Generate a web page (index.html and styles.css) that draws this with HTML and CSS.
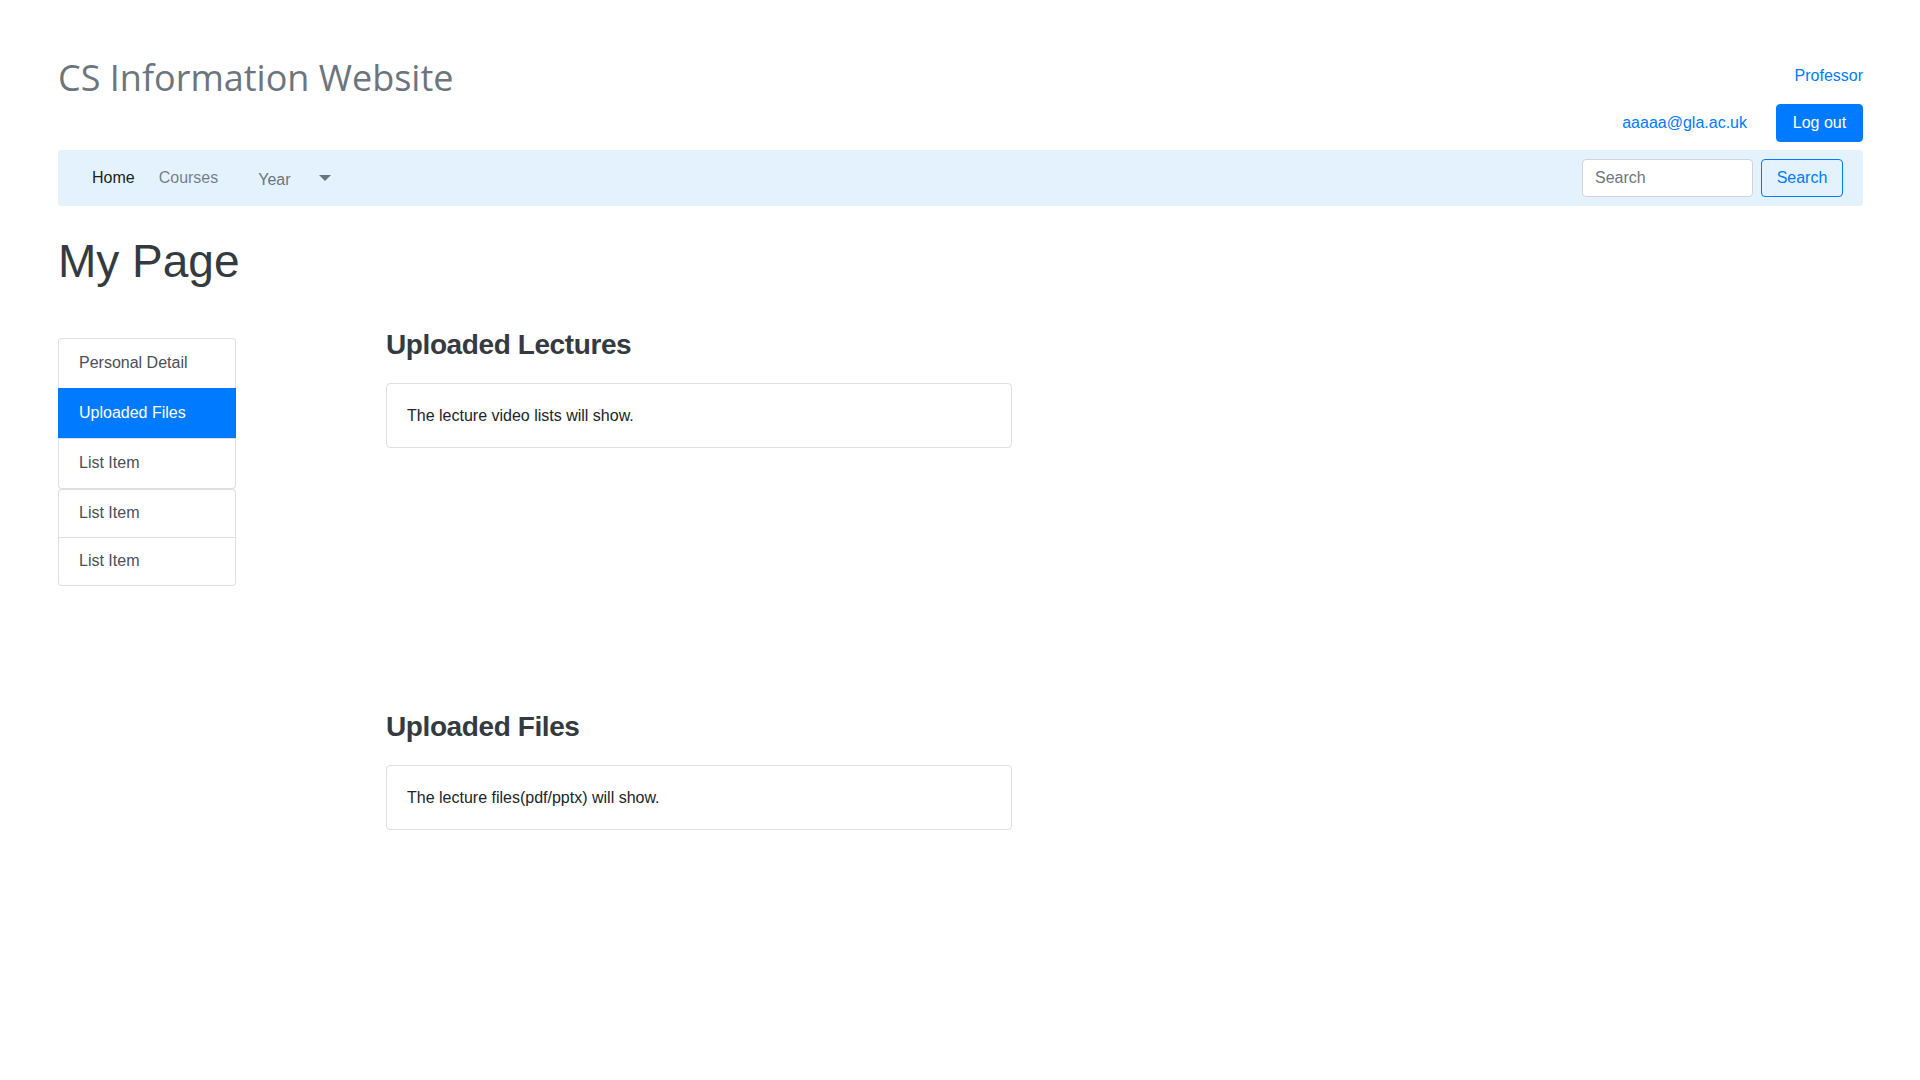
FILE: index.html
```html
<!DOCTYPE html>
<html lang="en">
<head>
<meta charset="utf-8">
<title>CS Information Website</title>
<link rel="stylesheet" href="styles.css">
</head>
<body>
<div class="page">
  <header class="top">
    <h1 class="site-title">CS Information Website</h1>
    <div class="account">
      <a class="role" href="#">Professor</a>
      <div class="user-row">
        <a class="email" href="#">aaaaa@gla.ac.uk</a>
        <button class="btn btn-primary logout">Log out</button>
      </div>
    </div>
  </header>

  <nav class="navbar">
    <ul class="nav">
      <li class="nav-link active">Home</li>
      <li class="nav-link">Courses</li>
    </ul>
    <div class="year-select">
      <span class="year-label">Year</span>
      <svg class="caret" width="12" height="6" viewBox="0 0 12 6"><path d="M0 0 L12 0 L6 6 Z" fill="#6c757d"/></svg>
    </div>
    <form class="search">
      <input class="search-input" type="text" placeholder="Search">
      <button class="btn btn-outline" type="button">Search</button>
    </form>
  </nav>

  <h1 class="page-title">My Page</h1>

  <div class="content">
    <aside class="sidebar">
      <div class="list-group">
        <div class="list-item">Personal Detail</div>
        <div class="list-item active">Uploaded Files</div>
        <div class="list-item">List Item</div>
      </div>
      <div class="list-group group-small">
        <div class="list-item">List Item</div>
        <div class="list-item">List Item</div>
      </div>
    </aside>
    <main class="main">
      <section class="section">
        <h3 class="section-title">Uploaded Lectures</h3>
        <div class="card">The lecture video lists will show.</div>
      </section>
      <section class="section section-files">
        <h3 class="section-title">Uploaded Files</h3>
        <div class="card">The lecture files(pdf/pptx) will show.</div>
      </section>
    </main>
  </div>
</div>
</body>
</html>
```

FILE: styles.css
```css
* { box-sizing: border-box; }

html, body {
  margin: 0;
  padding: 0;
  background: #ffffff;
}

body {
  font-family: "Liberation Sans", Arial, sans-serif;
  font-size: 16px;
  line-height: 24px;
  color: #212529;
}

a { text-decoration: none; }

.page {
  padding: 56px 57px 0 58px;
}

/* header */
.top {
  display: flex;
  justify-content: space-between;
  align-items: flex-start;
}

.site-title {
  margin: 0;
  font-family: "Open Sans", "Noto Sans", sans-serif;
  font-weight: 400;
  font-size: 36px;
  line-height: 44px;
  color: #6c757d;
}

.account {
  margin-top: 8px;
  display: flex;
  flex-direction: column;
  align-items: flex-end;
}

.role {
  color: #007bff;
  line-height: 24px;
}

.user-row {
  margin-top: 16px;
  display: flex;
  align-items: center;
}

.email {
  color: #007bff;
  margin-right: 29px;
}

.btn {
  font-family: "Liberation Sans", Arial, sans-serif;
  font-size: 16px;
  line-height: 24px;
  height: 38px;
  border-radius: 4px;
  border: 1px solid transparent;
  padding: 0;
  text-align: center;
  cursor: pointer;
}

.btn-primary {
  background: #007bff;
  border-color: #007bff;
  color: #ffffff;
}

.logout { width: 87px; }

.btn-outline {
  background: transparent;
  border-color: #007bff;
  color: #007bff;
  width: 82px;
}

/* navbar */
.navbar {
  margin-top: 8px;
  height: 56px;
  background: #e3f2fd;
  border-radius: 4px;
  display: flex;
  align-items: center;
  padding: 0 20px 0 22px;
}

.nav {
  list-style: none;
  margin: 0;
  padding: 0;
  display: flex;
}

.nav-link {
  padding: 0 12px;
  color: rgba(0, 0, 0, 0.5);
}

.nav-link.active {
  color: rgba(0, 0, 0, 0.9);
}

.year-select {
  margin-left: 28px;
  margin-top: 4px;
  display: flex;
  align-items: center;
  color: #6c757d;
}

.caret {
  margin-left: 28px;
  margin-top: -4px;
}

.search {
  margin: 0 0 0 auto;
  display: flex;
  align-items: center;
  gap: 8px;
}

.search-input {
  width: 171px;
  height: 38px;
  border: 1px solid #ced4da;
  border-radius: 4px;
  padding: 0 12px;
  font-family: "Liberation Sans", Arial, sans-serif;
  font-size: 16px;
  color: #495057;
  background: #ffffff;
  outline: none;
}

.search-input::placeholder { color: #6c757d; }

/* page title */
.page-title {
  margin: 27px 0 38px 0;
  font-size: 46px;
  line-height: 56px;
  font-weight: 400;
  color: #343a40;
}

/* content */
.content {
  display: flex;
  align-items: flex-start;
}

.sidebar {
  width: 178px;
  margin-top: 11px;
  flex-shrink: 0;
}

.list-group {
  display: flex;
  flex-direction: column;
}

.list-item {
  padding: 12px 20px 13px 20px;
  line-height: 24px;
  color: #495057;
  background: #ffffff;
  border: 1px solid rgba(0, 0, 0, 0.125);
  margin-top: -1px;
}

.list-group .list-item:first-child {
  margin-top: 0;
  border-top-left-radius: 4px;
  border-top-right-radius: 4px;
}

.list-group .list-item:last-child {
  border-bottom-left-radius: 4px;
  border-bottom-right-radius: 4px;
}

.group-small .list-item {
  padding: 11px 20px 12px 20px;
}

.list-item.active {
  background: #007bff;
  border-color: #007bff;
  color: #ffffff;
}

.main {
  margin-left: 150px;
  margin-top: 1px;
  width: 626px;
}

.section-title {
  margin: 0 0 21px 0;
  font-size: 28px;
  line-height: 34px;
  font-weight: 700;
  letter-spacing: -0.4px;
  color: #343a40;
}

.card {
  border: 1px solid rgba(0, 0, 0, 0.125);
  border-radius: 4px;
  padding: 20px;
  line-height: 23px;
  color: #212529;
}

.section-files {
  margin-top: 262px;
}
```
